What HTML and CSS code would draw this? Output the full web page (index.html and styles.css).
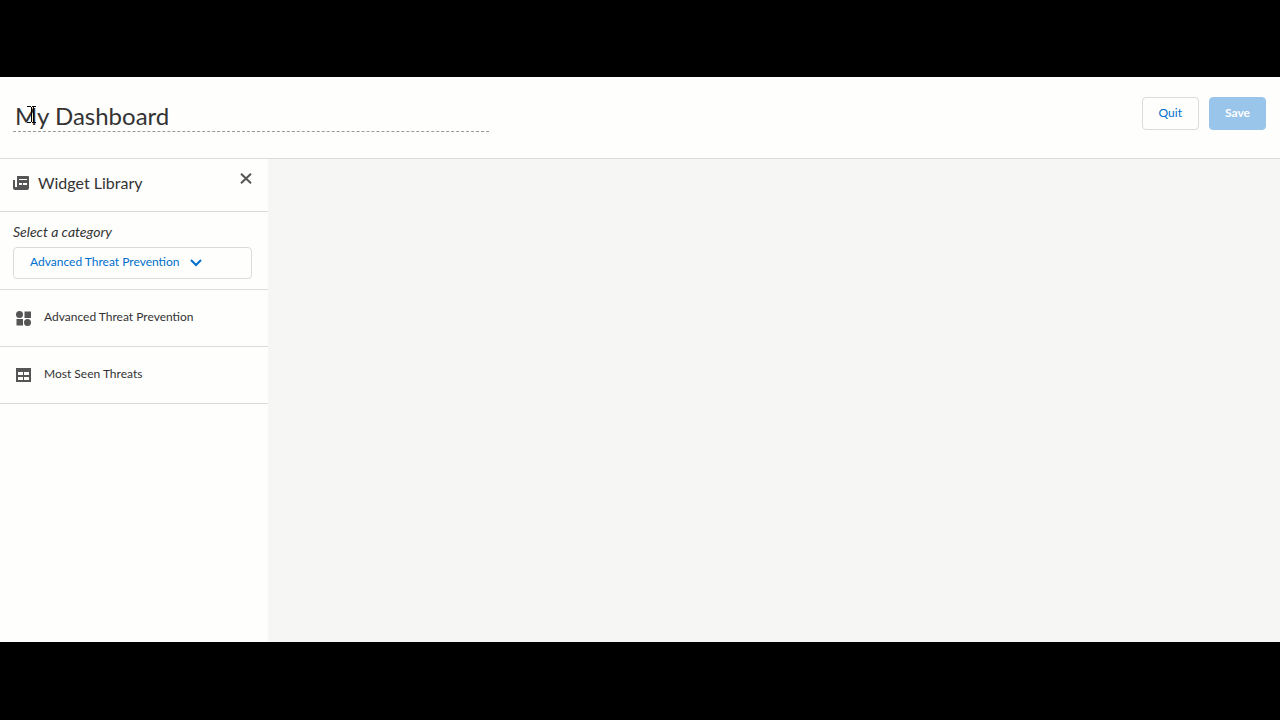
FILE: index.html
```html
<!DOCTYPE html>
<html lang="en">
	<head>
		<meta charset="utf-8">
		<title>My Dashboard</title>
		<link rel="stylesheet" href="styles.css">
	</head>
	<body>
		<div class="app">
			<header class="topbar">
				<div class="title-box">
					<input class="title" type="text" value="My Dashboard" aria-label="Dashboard name">
					<!-- text cursor -->
					<svg class="ibeam" width="9" height="17" viewBox="0 0 9 17" fill="none" stroke="#000">
						<path d="M0 .5h4M5 .5h4M4.5 1v15M6.5 1v15M0 16.5h4M5 16.5h4"/>
					</svg>
				</div>
				<div class="actions">
					<button class="btn" type="button">Quit</button>
					<button class="btn btn-save" type="button" disabled>Save</button>
				</div>
			</header>
			<div class="main">
				<aside class="library">
					<div class="library-head">
						<svg class="library-icon" width="16" height="14" viewBox="0 0 16 14" fill="#555">
							<path fill-rule="evenodd" d="M4 0h11q1 0 1 1v11q0 2-2 2H2q-2 0-2-2V4h2v7h2zM6 3v1h8V3zM6 7v2h3V7zM10 7v2h4V7z"/>
						</svg>
						<h2>Widget Library</h2>
						<button class="close" type="button" aria-label="Close">
							<svg width="12" height="11" viewBox="0 0 12 11" fill="none" stroke="#555" stroke-width="2">
								<path d="M1 .7l10 9.6M11 .7L1 10.3"/>
							</svg>
						</button>
					</div>
					<div class="category">
						<label for="category">Select a category</label>
						<div class="select-box">
							<select id="category">
								<option>Advanced Threat Prevention</option>
							</select>
							<svg width="12" height="8" viewBox="0 0 12 8" fill="none" stroke="#006fcc" stroke-width="2">
								<path d="M1 1l5 5 5-5"/>
							</svg>
						</div>
					</div>
					<ul class="widgets">
						<li>
							<svg width="15" height="15" viewBox="0 0 15 15" fill="#555">
								<circle cx="3.5" cy="3.5" r="3.5"/>
								<path d="M8.5 .5H15V7H8.5zM.5 8H7v6.5H.5z"/>
								<circle cx="11.5" cy="11.5" r="3.5"/>
							</svg>
							<span>Advanced Threat Prevention</span>
						</li>
						<li>
							<svg width="15" height="15" viewBox="0 0 15 15" fill="#555">
								<path fill-rule="evenodd" d="M0 0h15v14H0zM2 4v3h5V4zM8 4v3h5V4zM2 9v3h5V9zM8 9v3h5V9z"/>
							</svg>
							<span>Most Seen Threats</span>
						</li>
					</ul>
				</aside>
				<main class="canvas"></main>
			</div>
		</div>
	</body>
</html>
```

FILE: styles.css
```css
*{
	box-sizing: border-box;
	margin: 0;
	padding: 0;
}
body{
	display: flex;
	flex-direction: column;
	min-height: 100vh;
	padding: 77px 0 78px;
	background: #000;
	color: #333;
	font-family: Lato, "Liberation Sans", sans-serif;
	font-size: 12px;
	line-height: 16px;
}
button,input,select{
	font: inherit;
	color: inherit;
	border: 0;
	background: none;
}
.app{
	display: flex;
	flex-direction: column;
	flex: 1;
	background: #fefefd;
}
.topbar{
	display: flex;
	justify-content: space-between;
	align-items: flex-start;
	padding: 20px 14px 26px 13px;
	border-bottom: 1px solid #dadbdb;
}
.title-box{
	position: relative;
	width: 38%;
}
.title{
	display: block;
	width: 100%;
	height: 35px;
	padding: 4px 2px 2px;
	border-bottom: 1px dashed #999;
	font-size: 24px;
	line-height: 28px;
}
.ibeam{
	position: absolute;
	left: 14px;
	top: 9px;
}
.actions{
	display: flex;
	gap: 10px;
}
.btn{
	height: 33px;
	padding: 0 16px 2px;
	border: 1px solid #dadbdb;
	border-radius: 4px;
	color: #006fcc;
}
.btn-save{
	padding: 0 15px 2px;
	border-color: #99c5eb;
	background: #99c5eb;
	color: #fff;
	font-weight: bold;
}
.main{
	display: flex;
	flex: 1;
}
.library{
	width: 268px;
	flex: none;
}
.library-head{
	display: flex;
	align-items: center;
	height: 53px;
	padding: 0 16px 4px 13px;
	border-bottom: 1px solid #dadbdb;
}
.library-icon{
	margin-right: 9px;
}
.library-head h2{
	flex: 1;
	font-size: 16px;
	font-weight: normal;
	line-height: 20px;
}
.close{
	align-self: flex-start;
	padding-top: 14px;
}
.close svg{
	display: block;
}
.category{
	padding: 12px 16px 10px 13px;
	border-bottom: 1px solid #dadbdb;
}
.category label{
	display: block;
	margin-bottom: 7px;
	font-size: 14px;
	font-style: italic;
}
.select-box{
	display: flex;
	align-items: center;
	gap: 10px;
	height: 32px;
	padding-left: 16px;
	border: 1px solid #dadbdb;
	border-radius: 4px;
}
.select-box select{
	appearance: none;
	height: 28px;
	padding-bottom: 2px;
	color: #006fcc;
}
.widgets{
	list-style: none;
}
.widgets li{
	display: flex;
	align-items: center;
	gap: 13px;
	height: 57px;
	padding-left: 16px;
	border-bottom: 1px solid #dadbdb;
}
.widgets span{
	padding-bottom: 2px;
}
.canvas{
	flex: 1;
	background: #f6f6f5;
}
```
